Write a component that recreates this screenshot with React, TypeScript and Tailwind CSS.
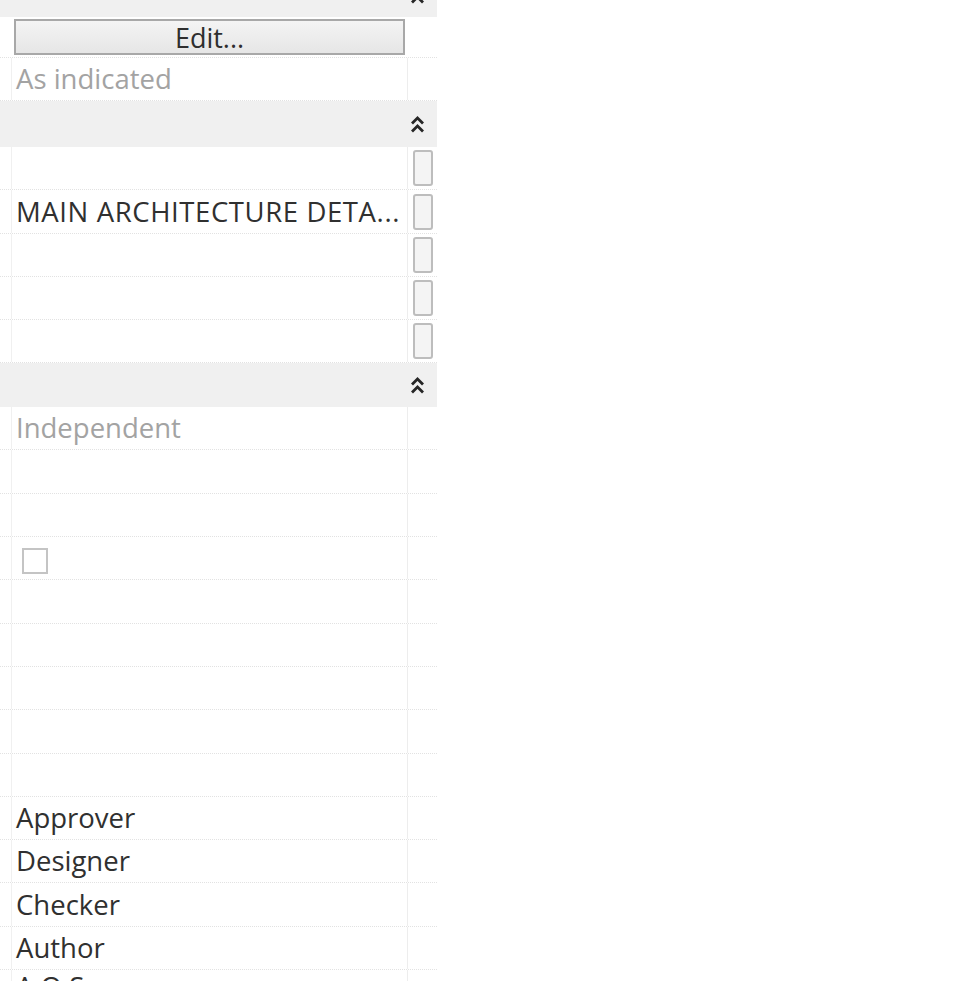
import React from "react";

const font = { fontFamily: '"Open Sans", "Noto Sans", "Liberation Sans", sans-serif' };

function Chevrons() {
  return (
    <svg width="15" height="20" viewBox="0 0 15 20" className="block">
      <path d="M2 9.5 L7.5 4 L13 9.5" fill="none" stroke="#262626" strokeWidth="2.8" strokeLinejoin="miter" />
      <path d="M2 17.5 L7.5 12 L13 17.5" fill="none" stroke="#262626" strokeWidth="2.8" strokeLinejoin="miter" />
    </svg>
  );
}

function Header({ h, className = "" }: { h: number; className?: string }) {
  return (
    <div className={`flex w-[437px] bg-[#f0f0f0] ${className}`} style={{ height: h }}>
      <div className="flex-1" />
      <div className="flex w-[29px] items-center justify-center pr-[10px]">
        <Chevrons />
      </div>
    </div>
  );
}

function Row({
  h,
  children,
  right,
}: {
  h: number;
  children?: React.ReactNode;
  right?: React.ReactNode;
}) {
  return (
    <div className="flex w-[437px] border-b border-dotted border-[#e2e2e2]" style={{ height: h }}>
      <div className="w-[12px] border-r border-[#f0f0f0]" />
      <div className="flex min-w-0 flex-1 items-center border-r border-[#ededed] pl-[4px]">{children}</div>
      <div className="flex w-[29px] items-center justify-center">{right}</div>
    </div>
  );
}

function SmallBtn() {
  return <div className="h-[36px] w-[20px] rounded-[3px] border-2 border-[#bdbdbd] bg-[#f4f4f4]" />;
}

export default function App() {
  const dark = "text-[27.5px] text-[#303030] leading-none whitespace-nowrap";
  const gray = "text-[27.5px] text-[#a3a3a3] leading-none whitespace-nowrap";
  return (
    <div className="h-[981px] w-[960px] overflow-hidden bg-white" style={font}>
      <div className="flex flex-col">
        <div className="h-[17px] overflow-hidden">
          <div className="-mt-[28px]">
            <Header h={45} />
          </div>
        </div>
        <div className="flex h-[41px] w-[437px] border-b border-dotted border-[#e2e2e2]">
          <div className="flex flex-1 items-center pl-[14px] pr-[1px]">
            <div className="flex h-[36px] w-[391px] items-center justify-center border-2 border-[#a8a8a8] bg-gradient-to-b from-[#f4f4f4] to-[#e6e6e6]">
              <span className="text-[27px] leading-none text-[#2e2e2e]">Edit...</span>
            </div>
          </div>
          <div className="w-[29px]" />
        </div>
        <Row h={43}>
          <span className={gray}>As indicated</span>
        </Row>
        <Header h={46} />
        <Row h={43} right={<SmallBtn />} />
        <Row h={44} right={<SmallBtn />}>
          <span className={`${dark} tracking-[0.6px]`}>MAIN ARCHITECTURE DETA...</span>
        </Row>
        <Row h={43} right={<SmallBtn />} />
        <Row h={43} right={<SmallBtn />} />
        <Row h={43} right={<SmallBtn />} />
        <Header h={44} />
        <Row h={43}>
          <span className={gray}>Independent</span>
        </Row>
        <Row h={44} />
        <Row h={43} />
        <Row h={43}>
          <div className="ml-[6px] mt-[6px] h-[26px] w-[26px] border-2 border-[#c4c4c4] bg-white" />
        </Row>
        <Row h={44} />
        <Row h={43} />
        <Row h={43} />
        <Row h={44} />
        <Row h={43} />
        <Row h={43}>
          <span className={dark}>Approver</span>
        </Row>
        <Row h={43}>
          <span className={dark}>Designer</span>
        </Row>
        <Row h={44}>
          <span className={dark}>Checker</span>
        </Row>
        <Row h={43}>
          <span className={dark}>Author</span>
        </Row>
        <Row h={43}>
          <span className={`${dark} -mt-[8px]`}>A.O.S.</span>
        </Row>
      </div>
    </div>
  );
}
